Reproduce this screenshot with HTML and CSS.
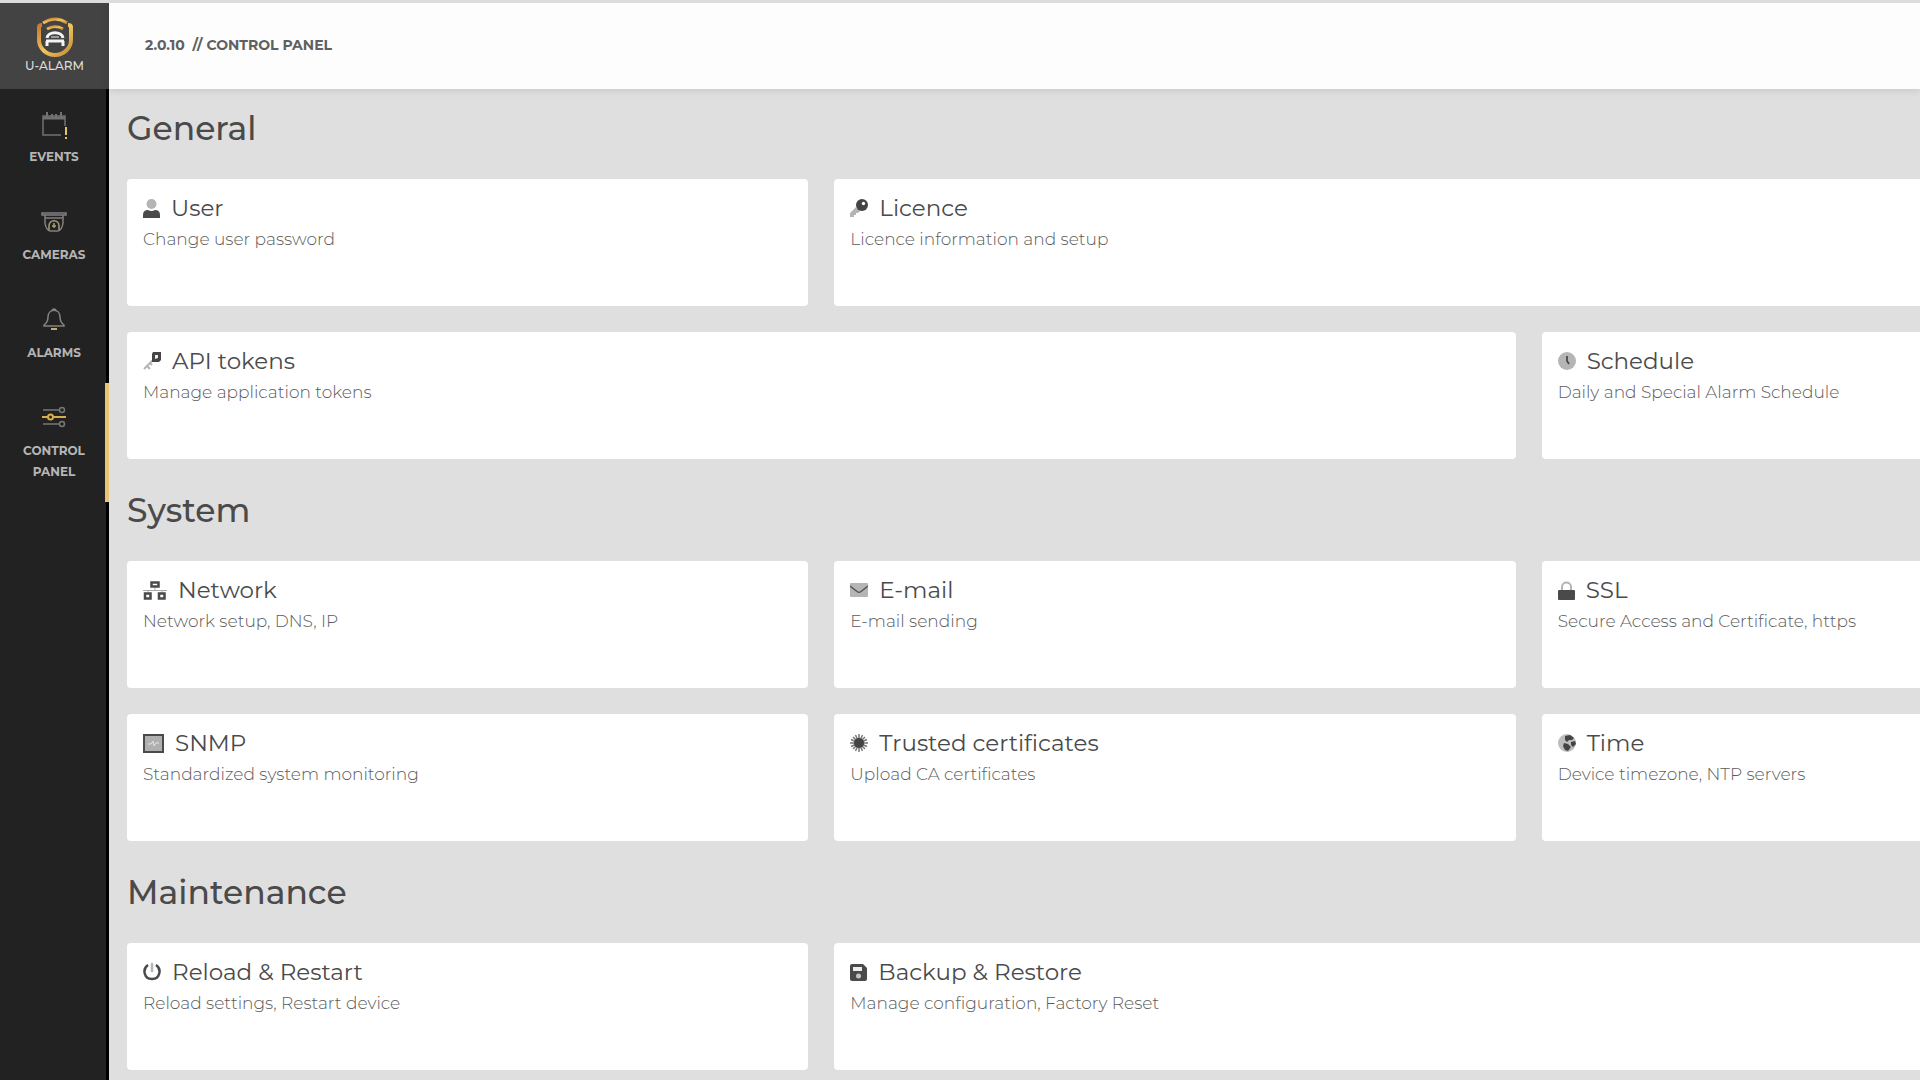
FILE: index.html
```html
<!DOCTYPE html>
<html lang="en">
<head>
<meta charset="utf-8">
<meta name="viewport" content="width=device-width, initial-scale=1">
<title>U-ALARM Control Panel</title>
<link rel="stylesheet" href="styles.css">
</head>
<body>
<div class="app">
  <aside class="sidebar">
    <a class="brand" href="#">
      <svg class="brand-mark" viewBox="0 0 36 40" aria-hidden="true">
        <defs><linearGradient id="gold" x1="0" y1="0" x2="1" y2="1"><stop offset="0" stop-color="#c9782f"/><stop offset=".5" stop-color="#efc65c"/><stop offset="1" stop-color="#c58a35"/></linearGradient></defs>
        <g fill="none" stroke="url(#gold)">
          <path d="M6 6Q18 -2 30 6" stroke-width="3"/>
          <path d="M5 8Q2 8 2 10V23C2 31 9 38 18 38S34 31 34 23V10Q34 8 31 8" stroke-width="4"/>
          <path d="M10 12Q18 7 26 12" stroke-width="3"/>
        </g>
        <g fill="none" stroke="#f4f4f4"><path d="M10 21C11 14 25 14 26 21" stroke-width="3"/><path d="M9 24H27M10 29V24M26 29V24" stroke-width="3"/><path d="M14 20H22" stroke-width="1"/></g>
      </svg>
      <span class="brand-name">U-ALARM</span>
    </a>
    <nav class="nav" aria-label="Main">
      <a class="nav-item" href="#events">
        <svg class="nav-icon" viewBox="0 0 30 30" aria-hidden="true"><g fill="none" stroke="#727272" stroke-width="1.5"><path d="M26 17V7H4V26H22"/><path d="M4 9H26" stroke-width="3"/><path d="M8 3V9M13 5V9M17 5V9M22 3V9" stroke-width="2"/></g><path d="M27 18V26M27 28V30" stroke="#e6c16a" stroke-width="2"/></svg>
        <span>EVENTS</span>
      </a>
      <a class="nav-item" href="#cameras">
        <svg class="nav-icon" viewBox="0 0 30 30" aria-hidden="true"><g fill="none" stroke="#808080" stroke-width="1.5"><path d="M3 6H27V8H3ZM6 8V16Q7 23 11 24H19Q23 23 24 16V8M6 11H24"/></g><g fill="none" stroke="#a99d78" stroke-width="1.5"><path d="M10 23V19C10 12 20 12 20 19V23"/><path d="M15 16V21M13 19H17"/></g></svg>
        <span>CAMERAS</span>
      </a>
      <a class="nav-item" href="#alarms">
        <svg class="nav-icon" viewBox="0 0 30 30" aria-hidden="true"><path d="M5 20Q9 17 9 12C9 3 21 3 21 12Q21 17 25 20V21H5ZM13 5Q15 3 17 5" fill="none" stroke="#838383" stroke-width="1.5"/><path d="M12 24H18" stroke="#c5ad70" stroke-width="2"/></svg>
        <span>ALARMS</span>
      </a>
      <a class="nav-item nav-item-active" href="#control-panel" aria-current="page">
        <svg class="nav-icon" viewBox="0 0 30 30" aria-hidden="true"><g fill="none" stroke="#777" stroke-width="1.5"><path d="M4 7H20M4 21H20"/><circle cx="23" cy="7" r="2.5"/><circle cx="23" cy="21" r="2.5"/></g><g fill="none" stroke="#d8ae4c" stroke-width="2"><path d="M3 14H9M14 14H27"/><circle cx="11.500" cy="14" r="2.500"/></g></svg>
        <span>CONTROL PANEL</span>
      </a>
    </nav>
  </aside>
  <div class="page">
    <header class="topbar"><h1 class="crumbs">2.0.10 &nbsp;// CONTROL PANEL</h1></header>
    <main class="content">
      <section>
        <h2 class="section-title">General</h2>
        <div class="cards">
          <a class="card" href="#user">
            <h3 class="card-title"><svg width="17" height="19" viewBox="0 0 17 19" aria-hidden="true"><circle cx="8.500" cy="5" r="5" fill="#b5b5b5"/><path d="M0 19V16Q0 11 5 11Q8.500 13 12 11Q17 11 17 16V19Z" fill="#4a4a4a"/></svg>User</h3>
            <p class="card-text">Change user password</p>
          </a>
          <a class="card card-wide" href="#licence">
            <h3 class="card-title"><svg width="18" height="18" viewBox="0 0 18 18" aria-hidden="true"><path d="M6 8L0 14V18H4V16H6V14H8L11 11Z" fill="#b5b5b5"/><circle cx="12" cy="6" r="6" fill="#444"/><circle cx="13.500" cy="4.500" r="1.700" fill="#fff"/></svg>Licence</h3>
            <p class="card-text">Licence information and setup</p>
          </a>
          <a class="card card-wide" href="#tokens">
            <h3 class="card-title"><svg width="18" height="18" viewBox="0 0 18 18" aria-hidden="true"><path d="M10 8L1 17M4 14L7 17M7 11L9 13" fill="none" stroke="#b5b5b5" stroke-width="2"/><path d="M10 0H18V8L16 10H9V2Z" fill="#444"/><path d="M12 7V3H15V6Z" fill="#eee"/></svg>API tokens</h3>
            <p class="card-text">Manage application tokens</p>
          </a>
          <a class="card" href="#schedule">
            <h3 class="card-title"><svg width="18" height="18" viewBox="0 0 18 18" aria-hidden="true"><circle cx="9" cy="9" r="9" fill="#b5b5b5"/><path d="M9 4V9L11 12" fill="none" stroke="#444" stroke-width="1.700"/></svg>Schedule</h3>
            <p class="card-text">Daily and Special Alarm Schedule</p>
          </a>
        </div>
      </section>
      <section>
        <h2 class="section-title">System</h2>
        <div class="cards">
          <a class="card" href="#network">
            <h3 class="card-title"><svg width="24" height="19" viewBox="0 0 24 19" aria-hidden="true"><path d="M0 9.500H24M12 6V9M5 9V12M19 9V12" stroke="#aaa"/><g fill="none" stroke="#4a4a4a" stroke-width="2.500"><path d="M8.500 1.500H15.500V5.500H8.500ZM2 12.500H7.500V17.500H2ZM16 12.500H21.500V17.500H16Z"/></g></svg>Network</h3>
            <p class="card-text">Network setup, DNS, IP</p>
          </a>
          <a class="card" href="#email">
            <h3 class="card-title"><svg width="18" height="14" viewBox="0 0 18 14" aria-hidden="true"><rect width="18" height="14" rx="1" fill="#b5b5b5"/><path d="M0 3L7 8.500Q9 10 11 8.500L18 3" fill="none" stroke="#555" stroke-width="1.500"/></svg>E-mail</h3>
            <p class="card-text">E-mail sending</p>
          </a>
          <a class="card" href="#ssl">
            <h3 class="card-title"><svg width="17" height="19" viewBox="0 0 17 19" aria-hidden="true"><path d="M4 10V6C4 0 13 0 13 6V10" fill="none" stroke="#b5b5b5" stroke-width="2"/><rect y="9" width="17" height="10" rx="1" fill="#4a4a4a"/></svg>SSL</h3>
            <p class="card-text">Secure Access and Certificate, https</p>
          </a>
          <a class="card" href="#snmp">
            <h3 class="card-title"><svg width="21" height="19" viewBox="0 0 21 19" aria-hidden="true"><rect x="1" y="1" width="19" height="17" fill="#b0b0b0" stroke="#4a4a4a" stroke-width="2"/><path d="M5 10H8L10 7L11 12L13 9H16" fill="none" stroke="#e4e4e4"/></svg>SNMP</h3>
            <p class="card-text">Standardized system monitoring</p>
          </a>
          <a class="card" href="#certificates">
            <h3 class="card-title"><svg width="18" height="18" viewBox="0 0 18 18" aria-hidden="true"><path d="M9 0V18M0 9H18M3 3L15 15M3 15L15 3M5.500 1L12.500 17M12.500 1L5.500 17M1 5.500L17 12.500M1 12.500L17 5.500" stroke="#777" stroke-width="1.500"/><circle cx="9" cy="9" r="5" fill="#444"/></svg>Trusted certificates</h3>
            <p class="card-text">Upload CA certificates</p>
          </a>
          <a class="card" href="#time">
            <h3 class="card-title"><svg width="18" height="18" viewBox="0 0 18 18" aria-hidden="true"><circle cx="9" cy="9" r="9" fill="#bdbdbd"/><path d="M7 2L12 1L16 4L14 6H11L9 8L7 6ZM6 9L10 10L13 13L10 17L7 16L5 12ZM13 8L17 7L18 10L15 13L13 11Z" fill="#444"/></svg>Time</h3>
            <p class="card-text">Device timezone, NTP servers</p>
          </a>
        </div>
      </section>
      <section>
        <h2 class="section-title">Maintenance</h2>
        <div class="cards">
          <a class="card" href="#restart">
            <h3 class="card-title"><svg width="18" height="18" viewBox="0 0 18 18" aria-hidden="true"><path d="M5 2C-1 6 1 16 9 16S19 6 13 2" fill="none" stroke="#4a4a4a" stroke-width="2.500"/><path d="M9 0V9" stroke="#b5b5b5" stroke-width="2.500"/></svg>Reload &amp; Restart</h3>
            <p class="card-text">Reload settings, Restart device</p>
          </a>
          <a class="card card-wide" href="#backup">
            <h3 class="card-title"><svg width="17" height="17" viewBox="0 0 17 17" aria-hidden="true"><path d="M2 0H13L17 4V15Q17 17 15 17H2Q0 17 0 15V2Q0 0 2 0Z" fill="#4a4a4a"/><path d="M3 3H12V7H3Z" fill="#eee"/><circle cx="8.500" cy="12" r="2.500" fill="#c4c4c4"/></svg>Backup &amp; Restore</h3>
            <p class="card-text">Manage configuration, Factory Reset</p>
          </a>
        </div>
      </section>
    </main>
  </div>
</div>
</body>
</html>
```
FILE: styles.css
```css
* { box-sizing: border-box; }

body {
  margin: 0;
  background: #dfdfdf;
  color: #4a4a4a;
  font-family: Montserrat, Inter, "Open Sans", sans-serif;
}

h1, h2, h3, p { margin: 0; }
a { color: inherit; text-decoration: none; }
svg { flex: none; }

.app {
  display: flex;
  height: 100vh;
  border-top: 3px solid #dcdcdc;
  overflow: hidden;
}

.sidebar {
  display: flex;
  flex-direction: column;
  flex: none;
  width: 109px;
  background: #222;
}

.brand {
  display: flex;
  flex-direction: column;
  align-items: center;
  height: 86px;
  padding-top: 14px;
  background: #434343;
}

.brand-mark { width: 36px; height: 40px; }

.brand-name {
  color: #dedede;
  font-size: 12px;
  font-weight: 500;
  line-height: 18px;
}

.nav {
  flex: 1;
  background: linear-gradient(#000, #000) right / 3px 100% no-repeat;
}

.nav-item {
  display: flex;
  flex-direction: column;
  align-items: center;
  gap: 7px;
  padding: 20px 16px;
  border-right: 4px solid transparent;
  border-left: 3px solid transparent;
  color: #b5b5b5;
  font-size: 12px;
  font-weight: 700;
  line-height: 21px;
  text-align: center;
}

.nav-item-active { border-right-color: #e8c473; }
.nav-icon { width: 30px; height: 30px; }

.page {
  display: flex;
  flex-direction: column;
  flex: 1;
  min-width: 0;
}

.topbar {
  z-index: 1;
  display: flex;
  align-items: center;
  flex: none;
  height: 86px;
  padding: 0 36px 2px;
  background: #fdfdfd;
  box-shadow: 0 1px 8px rgba(0, 0, 0, .12);
}

.crumbs {
  color: #606060;
  font-size: 14px;
  font-weight: 700;
  line-height: 20px;
}

.content {
  flex: 1;
  min-height: 0;
  padding-left: 18px;
  overflow: hidden;
}

.section-title {
  padding: 30px 0;
  font-size: 33px;
  font-weight: 500;
  line-height: 42px;
}

section:first-child .section-title { padding-top: 18px; }

.cards {
  display: grid;
  grid-template-columns: repeat(3, 38%);
  gap: 26px;
}

.card {
  min-height: 127px;
  padding: 14px 16px;
  border-radius: 4px;
  background: #fff;
}

.card-wide { grid-column: span 2; }

.card-title {
  display: flex;
  align-items: center;
  gap: 11px;
  font-size: 23px;
  font-weight: 450;
  line-height: 30px;
}

.card-text {
  padding-top: 4px;
  color: #5c5c5c;
  font-size: 17px;
  font-weight: 300;
  line-height: 24px;
}
```
